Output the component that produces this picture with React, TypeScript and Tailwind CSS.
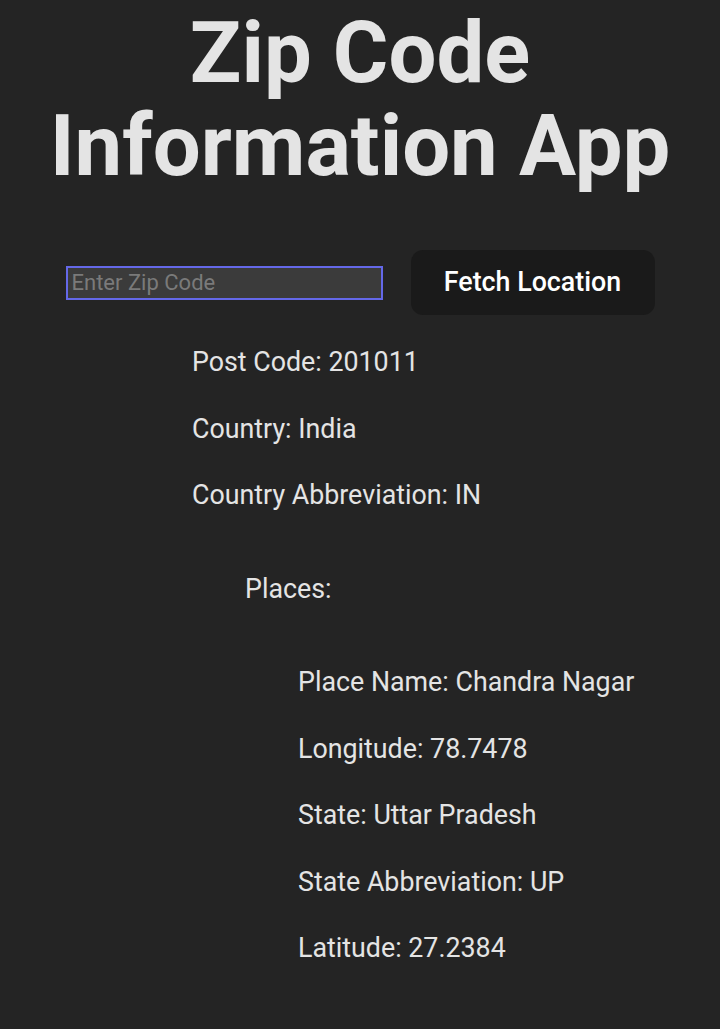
import { useState } from 'react'

const place = [
  ['Place Name', 'Chandra Nagar'],
  ['Longitude', '78.7478'],
  ['State', 'Uttar Pradesh'],
  ['State Abbreviation', 'UP'],
  ['Latitude', '27.2384'],
]

export default function App() {
  const [zip, setZip] = useState('')

  return (
    <main className="min-h-screen bg-[#242424] text-[#e4e4e4] font-['Roboto','Liberation_Sans',sans-serif] pt-[7px]">
      <h1 className="text-center text-[85px] leading-[93px] font-bold">
        Zip Code
        <br />
        Information App
      </h1>

      <div className="mt-[57px] flex items-center justify-center gap-[28px]">
        <input
          value={zip}
          onChange={(e) => setZip(e.target.value)}
          placeholder="Enter Zip Code"
          className="w-[317px] h-[34px] bg-[#3b3b3b] border-2 border-[#6468e8] px-[4px] text-[22px] text-[#e4e4e4] placeholder:text-[#7a7a7a] outline-none"
        />
        <button className="w-[244px] h-[65px] rounded-[12px] bg-[#1a1a1a] text-[26.8px] font-medium text-white">
          Fetch Location
        </button>
      </div>

      <div className="mt-[27px] pl-[192px] flex flex-col gap-[26.5px] text-[26.8px] leading-[40px]">
        <p>Post Code: 201011</p>
        <p>Country: India</p>
        <p>Country Abbreviation: IN</p>
        <p className="mt-[27px] pl-[53px]">Places:</p>
        <div className="mt-[27px] pl-[106px] flex flex-col gap-[26.5px]">
          {place.map(([k, v]) => (
            <p key={k}>
              {k}: {v}
            </p>
          ))}
        </div>
      </div>
    </main>
  )
}
